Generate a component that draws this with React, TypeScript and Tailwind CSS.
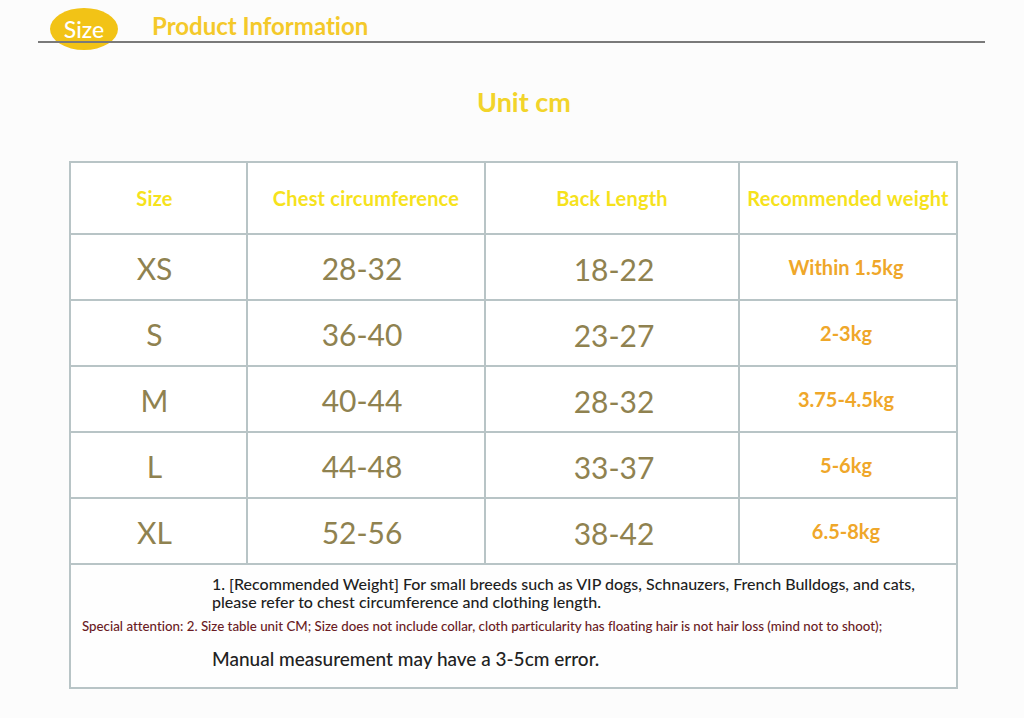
const rows = [
  { size: "XS", chest: "28-32", back: "18-22", weight: "Within 1.5kg" },
  { size: "S", chest: "36-40", back: "23-27", weight: "2-3kg" },
  { size: "M", chest: "40-44", back: "28-32", weight: "3.75-4.5kg" },
  { size: "L", chest: "44-48", back: "33-37", weight: "5-6kg" },
  { size: "XL", chest: "52-56", back: "38-42", weight: "6.5-8kg" },
];

const headers = ["Size", "Chest circumference", "Back Length", "Recommended weight"];
const widths = ["w-[177px]", "w-[238px]", "w-[254px]", "w-[218px]"];

export default function App() {
  return (
    <div className="w-[1024px] h-[718px] bg-[#fcfcfc] font-['Lato',sans-serif] [font-variant-ligatures:none] overflow-hidden">
      {/* Title bar */}
      <div className="relative h-[44px]">
        <div className="absolute left-[50px] top-[8px] w-[68px] h-[42px] rounded-[50%] bg-[#f2c316] flex items-center justify-center">
          <span className="text-white text-[23px] leading-none font-medium">Size</span>
        </div>
        <div className="absolute left-[152px] top-[14px] text-[#f4c92a] text-[24px] font-bold leading-none">
          Product Information
        </div>
        <div className="absolute left-[38px] top-[41px] w-[947px] h-[2px] bg-[#7a7a7a]" />
      </div>

      <div className="text-center text-[#f2d42a] text-[27px] font-bold mt-[44px] leading-none pl-[24px]">
        Unit cm
      </div>

      <div className="ml-[69px] mt-[46px] w-[887px] bg-white">
        <table className="border-collapse w-full table-fixed">
          <thead>
            <tr className="h-[72px]">
              {headers.map((h, i) => (
                <th
                  key={h}
                  className={`${widths[i]} border-2 border-[#b8c4c6] text-[#f6e21c] text-[20px] font-bold text-center whitespace-nowrap tracking-[0.2px] ${i === 0 ? "pr-[8px]" : ""}`}
                >
                  {h}
                </th>
              ))}
            </tr>
          </thead>
          <tbody>
            {rows.map((r) => (
              <tr key={r.size} className="h-[66px]">
                <td className="border-2 border-[#b8c4c6] text-center text-[30px] text-[#8f8250] pt-[2px] pr-[8px]">{r.size}</td>
                <td className="border-2 border-[#b8c4c6] text-center text-[30px] text-[#8f8250] pt-[2px] pr-[8px]">{r.chest}</td>
                <td className="border-2 border-[#b8c4c6] text-center text-[30px] text-[#8f8250] pt-[4px] pl-[4px]">{r.back}</td>
                <td className="border-2 border-[#b8c4c6] text-center text-[20px] font-bold text-[#efa72a] pr-[4px]">{r.weight}</td>
              </tr>
            ))}
            <tr className="h-[124px]">
              <td colSpan={4} className="border-2 border-[#b8c4c6] align-top bg-[#fefefe]">
                <div className="pt-[10px] pl-[141px] text-[16px] leading-[18px] text-[#1e1e1e] font-medium">
                  1. [Recommended Weight] For small breeds such as VIP dogs, Schnauzers, French Bulldogs, and cats,
                  <br />
                  please refer to chest circumference and clothing length.
                </div>
                <div className="pl-[11px] mt-[8px] text-[13.3px] leading-[15px] text-[#6a1b24] font-medium whitespace-nowrap">
                  Special attention: 2. Size table unit CM; Size does not include collar, cloth particularity has floating hair is not hair loss (mind not to shoot);
                </div>
                <div className="pl-[141px] mt-[15px] text-[19px] leading-[20px] text-[#222] font-medium">
                  Manual measurement may have a 3-5cm error.
                </div>
              </td>
            </tr>
          </tbody>
        </table>
      </div>
    </div>
  );
}
